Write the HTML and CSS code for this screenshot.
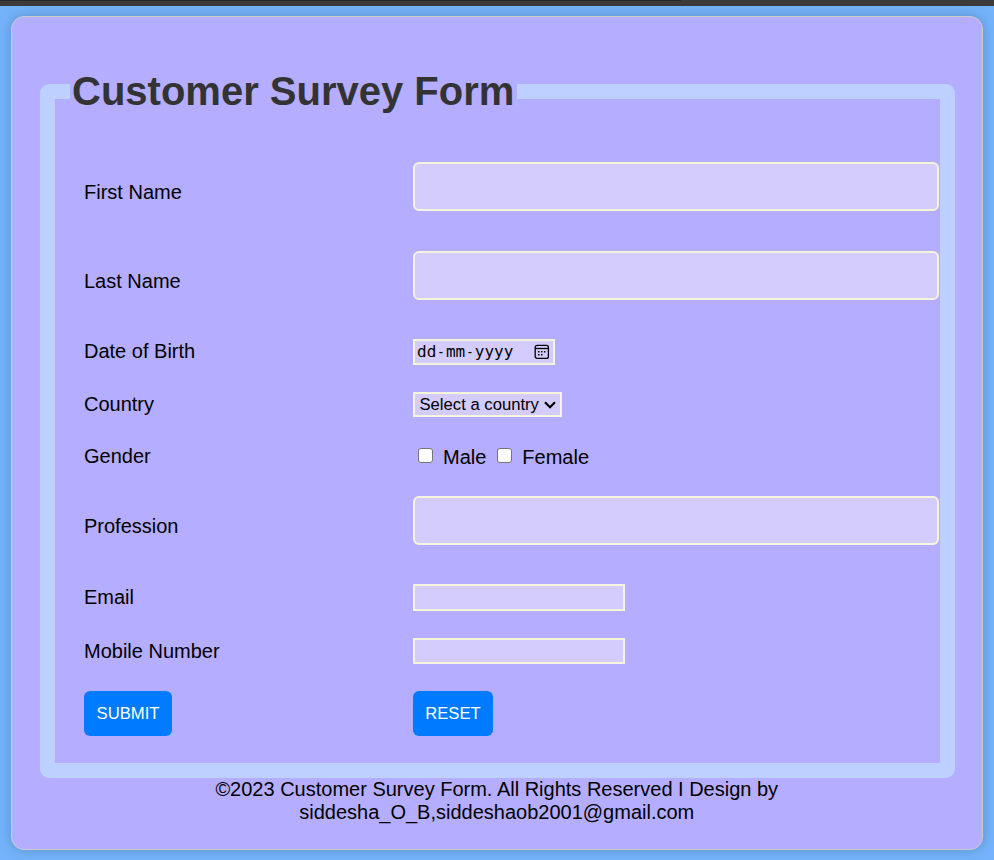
FILE: index.html
```html
<!DOCTYPE html>
<html lang="en">
<head>
<meta charset="utf-8">
<title>Customer Survey Form</title>
<link rel="stylesheet" href="styles.css">
</head>
<body>
<div class="topbar"><div class="topbar-edge"></div></div>
<main class="card">
  <form>
    <fieldset class="survey">
      <legend><h1>Customer Survey Form</h1></legend>
      <div class="row tall"><label for="first">First Name</label><input class="text-lg" id="first" type="text"></div>
      <div class="row tall last-name"><label for="last">Last Name</label><input class="text-lg" id="last" type="text"></div>
      <div class="row dob"><span class="label">Date of Birth</span>
        <div class="date"><span class="date-text">dd<span class="dash">-</span>mm<span class="dash">-</span>yyyy</span>
          <svg width="16" height="16" viewBox="0 0 16 16" fill="none" stroke="#000" stroke-width="1.3"><rect x="1.2" y="1.4" width="13.2" height="13" rx="2"/><path d="M1 4.5h13.5"/><path stroke-width="1.6" d="M7 7.8h1.5M10 7.8h1.5M4 7.8h1.5M4 10.8h1.5M7 10.8h1.5"/></svg>
        </div></div>
      <div class="row country"><label for="country">Country</label>
        <div class="select"><select id="country"><option>Select a country</option></select>
          <svg width="12" height="8" viewBox="0 0 12 8" fill="none" stroke="#000" stroke-width="2.2"><path d="M1 1.2l5 5 5-5"/></svg>
        </div></div>
      <div class="row gender"><span class="label">Gender</span>
        <div class="checks"><input id="male" type="checkbox"><label for="male">Male</label><input id="female" type="checkbox"><label for="female">Female</label></div></div>
      <div class="row tall profession"><label for="job">Profession</label><input class="text-lg" id="job" type="text"></div>
      <div class="row email"><label for="email">Email</label><input class="text-sm" id="email" type="email"></div>
      <div class="row mobile"><label for="mobile">Mobile Number</label><input class="text-sm short" id="mobile" type="tel"></div>
      <div class="row buttons"><button class="submit" type="submit">SUBMIT</button><button class="reset" type="reset">RESET</button></div>
    </fieldset>
  </form>
  <footer>©2023 Customer Survey Form. All Rights Reserved I Design by<br>siddesha_O_B,siddeshaob2001@gmail.com</footer>
</main>
</body>
</html>
```
FILE: styles.css
```css
* { box-sizing: border-box; }
body {
  margin: 0;
  height: 860px;
  overflow: hidden;
  background: #74b3fb;
  font: 20px/23px "Liberation Sans", Arial, sans-serif;
  color: #000;
}
.topbar { height: 6px; background: #3b3b3b; }
.topbar-edge { width: 681px; height: 1px; background: #292929; }
.card {
  width: 972px;
  height: 834px;
  margin: 10px 0 0 11px;
  padding: 51px 27px 0 28px;
  border: 1px solid #ccc;
  border-radius: 13px;
  background: #b5adff;
  box-shadow: 0 0 13px rgba(0, 0, 0, .2);
}
.survey {
  width: 915px;
  height: 710px;
  margin: 0;
  padding: 48px 0 0 29px;
  border: 15px solid #bdd0ff;
  border-radius: 9px;
}
legend { margin-left: -14px; padding: 0 2px; width: 447px; }
h1 { margin: 0; font-size: 40px; line-height: 46px; color: #333; white-space: nowrap; }
.row { display: grid; grid-template-columns: 329px 1fr; align-items: start; }
.tall { height: 89px; }
.last-name, .profession { height: 88px; }
.dob { height: 53px; }
.country, .gender { height: 52px; }
.email { height: 54px; }
.mobile { height: 53px; }
.tall > label { padding-top: 19px; }
.dob > .label, .country > label, .gender > .label { padding-top: 1px; }
.email > label, .mobile > label { padding-top: 2px; }
.text-lg, .text-sm, .date, .select { border: 2px solid beige; background: #d3ccfd; margin: 0; }
.text-lg { width: 526px; height: 49px; border-radius: 6px; }
.text-sm { width: 212px; height: 27px; }
.short { height: 26px; }
.date {
  display: flex;
  justify-content: space-between;
  align-items: center;
  width: 142px;
  height: 26px;
  padding: 0 3px 0 2px;
}
.date-text { font: 16px/20px "DejaVu Sans Mono", monospace; }
.dash { display: inline-block; transform: scaleX(.75); }
.select { display: flex; align-items: center; width: 149px; height: 25px; padding-left: 4.5px; }
.select select {
  appearance: none;
  width: 124.5px;
  padding: 0;
  border: 0;
  background: transparent;
  color: #000;
  font: 16.67px/20px "Liberation Sans", Arial, sans-serif;
}
.checks { display: flex; padding: 2px 0 0 5px; }
.checks input {
  appearance: none;
  width: 15px;
  height: 15px;
  margin: 2px 10px 0 0;
  border: 1px solid #767676;
  border-radius: 3px;
  background: #fff;
}
.checks label { margin-right: 11px; }
button {
  height: 45px;
  padding: 0;
  border: 0;
  border-radius: 6px;
  background: #007bff;
  color: #fff;
  font: 16.67px "Liberation Sans", Arial, sans-serif;
}
.submit { width: 88px; }
.reset { width: 80px; }
footer { padding-right: 1.5px; text-align: center; }
```
